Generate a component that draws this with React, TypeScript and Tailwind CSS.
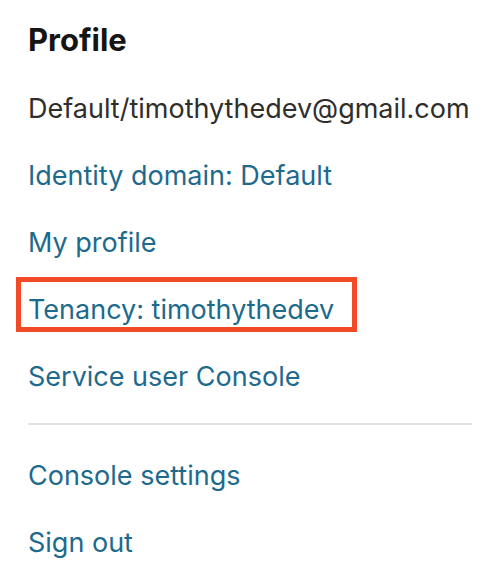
const links = ["Identity domain: Default", "My profile"];

export default function App() {
  return (
    <div className="min-h-[576px] w-[494px] bg-white pl-[28px] pr-[22px] font-['Inter',sans-serif]">
      <h2 className="pt-[18px] text-[31px] font-bold leading-[44px] text-[#161513]">Profile</h2>
      <div className="mt-[13px] text-[27px] leading-[67px] text-[#312d2a]">
        Default/timothythedev@gmail.com
      </div>
      {links.map((l) => (
        <a key={l} className="block text-[27px] leading-[67px] text-[#1e6a8c]">
          {l}
        </a>
      ))}
      <div className="relative">
        <a className="block text-[27px] leading-[67px] text-[#1e6a8c]">Tenancy: timothythedev</a>
        <div className="absolute left-[-12px] top-[1px] h-[55px] w-[341px] border-[5px] border-[#f04a27]" />
      </div>
      <a className="block text-[27px] leading-[67px] text-[#1e6a8c]">Service user Console</a>
      <hr className="mt-[13px] border-t-2 border-[#e4e1dd]" />
      <a className="mt-[17px] block text-[27px] leading-[67px] text-[#1e6a8c]">Console settings</a>
      <a className="block text-[27px] leading-[67px] text-[#1e6a8c]">Sign out</a>
    </div>
  );
}
